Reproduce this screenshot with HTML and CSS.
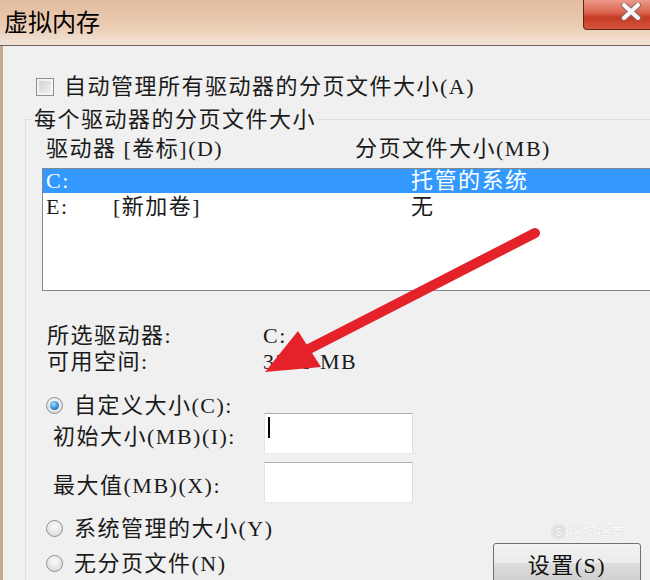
FILE: index.html
```html
<!DOCTYPE html>
<html lang="zh-CN">
<head>
    <meta charset="UTF-8">
    <title>虚拟内存</title>
    <link rel="stylesheet" href="styles.css">
</head>
<body>

    <div class="frame">
        <div class="titlebar">
            <span class="title">虚拟内存</span>
            <div class="close-btn">
                <svg width="20" height="17" viewBox="0 0 20 17">
                    <path d="M3 2 L17 15 M17 2 L3 15" stroke="#8a6a66" stroke-width="6" stroke-linecap="round"/>
                    <path d="M3 2 L17 15 M17 2 L3 15" stroke="#fafafa" stroke-width="4" stroke-linecap="round"/>
                </svg>
            </div>
        </div>

        <div class="window">
            <div class="check-row">
                <span class="checkbox"></span>自动管理所有驱动器的分页文件大小(A)
            </div>

            <div class="group">
                <div class="legend">每个驱动器的分页文件大小</div>

                <div class="list-head">
                    <span class="col-drive">驱动器 [卷标](D)</span>
                    <span>分页文件大小(MB)</span>
                </div>

                <div class="drive-list">
                    <div class="drive-row selected">
                        <span class="col-name">C:</span>
                        <span>托管的系统</span>
                    </div>
                    <div class="drive-row">
                        <span class="col-name"><span class="letter">E:</span>[新加卷]</span>
                        <span>无</span>
                    </div>
                </div>

                <div class="info">
                    <span>所选驱动器:</span><span>C:</span>
                    <span>可用空间:</span><span>3538 MB</span>
                </div>

                <div class="radio-row custom">
                    <span class="radio checked"></span>自定义大小(C):
                </div>
                <div class="field first">
                    <span class="field-label">初始大小(MB)(I):</span>
                    <span class="textbox"><span class="caret"></span></span>
                </div>
                <div class="field second">
                    <span class="field-label">最大值(MB)(X):</span>
                    <span class="textbox"></span>
                </div>
                <div class="radio-row system">
                    <span class="radio"></span>系统管理的大小(Y)
                </div>
                <div class="last-row">
                    <div class="radio-row">
                        <span class="radio"></span>无分页文件(N)
                    </div>
                    <button class="set-btn">设置(S)</button>
                </div>
            </div>
        </div>
    </div>

    <div class="watermark"><span class="wm-logo">S</span>搜狗指南</div>

    <svg class="arrow" width="650" height="580" viewBox="0 0 650 580">
        <line x1="535" y1="233" x2="305" y2="351" stroke="#e5212a" stroke-width="10" stroke-linecap="round"/>
        <polygon points="265,372 298,331 321,367" fill="#e5212a"/>
    </svg>

</body>
</html>
```

FILE: styles.css
```css
* {
    box-sizing: border-box;
}
body {
    margin: 0;
    width: 650px;
    height: 580px;
    overflow: hidden;
    background: #f0f0f0;
    font-family: "Liberation Serif", "Noto Sans CJK SC", serif;
    font-size: 22px;
    letter-spacing: 1.5px;
    color: #1a1a1a;
}
.frame {
    width: 700px;
}
.titlebar {
    height: 46px;
    display: flex;
    align-items: flex-start;
    background: linear-gradient(#e2bc9d, #ebcdb4 60%, #f2e4d8);
    border-bottom: 1px solid #6f6259;
}
.title {
    font-family: "Noto Sans CJK SC", sans-serif;
    font-size: 24px;
    letter-spacing: 0;
    line-height: 42px;
    padding-left: 4px;
    color: #000;
}
.close-btn {
    margin-left: auto;
    margin-right: 21px;
    width: 96px;
    height: 30px;
    display: flex;
    justify-content: center;
    padding-top: 3px;
    border: 1px solid #5b2a1f;
    border-top: none;
    border-radius: 0 0 4px 4px;
    background: linear-gradient(#ec9a88, #d9604a 45%, #c53b26 60%, #d5553b);
}
.window {
    height: 534px;
    padding-top: 27px;
    border-left: 3px solid #c6a98f;
}
.check-row {
    display: flex;
    align-items: center;
    line-height: 27px;
    margin-left: 33px;
}
.checkbox {
    width: 18px;
    height: 18px;
    margin-right: 10px;
    border: 1px solid #8f8f8f;
    background: linear-gradient(135deg, #cdcdcd, #f6f6f6);
    box-shadow: inset 0 0 0 2px #f4f4f4;
}
.group {
    height: 600px;
    margin-top: 19px;
    margin-left: 22px;
    padding-left: 16px;
    border-top: 1px solid #d5dfe5;
    border-left: 1px solid #d5dfe5;
}
.legend {
    width: fit-content;
    margin-top: -14px;
    margin-left: -10px;
    padding: 0 2px;
    line-height: 27px;
    background: #f0f0f0;
}
.list-head {
    display: flex;
    margin-top: 2px;
    padding-left: 4px;
    line-height: 27px;
}
.col-drive {
    width: 309px;
}
.drive-list {
    width: 640px;
    height: 123px;
    margin-top: 6px;
    border: 1px solid #828790;
    background: #fff;
}
.drive-row {
    display: flex;
    height: 24px;
    line-height: 24px;
    margin-bottom: 2px;
    padding-left: 3px;
}
.drive-row.selected {
    background: #3399ff;
    color: #fff;
}
.col-name {
    width: 365px;
}
.letter {
    display: inline-block;
    width: 67px;
}
.info {
    display: grid;
    grid-template-columns: 216px auto;
    margin-top: 32px;
    padding-left: 5px;
    line-height: 26px;
}
.radio-row {
    display: flex;
    align-items: center;
    padding-left: 4px;
    line-height: 27px;
}
.radio-row.custom {
    margin-top: 17px;
}
.radio-row.system {
    margin-top: 12px;
}
.radio {
    position: relative;
    width: 17px;
    height: 17px;
    margin-right: 11px;
    border: 1px solid #8e8f8f;
    border-radius: 50%;
    background: radial-gradient(circle at 50% 35%, #fbfbfb, #d6d6d6);
}
.radio.checked::after {
    content: "";
    position: absolute;
    left: 3px;
    top: 3px;
    width: 9px;
    height: 9px;
    border-radius: 50%;
    background: radial-gradient(circle at 40% 35%, #a6e0ff, #2b86d6 60%, #145fa8);
}
.field {
    display: flex;
    align-items: center;
    padding-left: 11px;
}
.field.first {
    margin-top: -6px;
}
.field.second {
    margin-top: 8px;
}
.field-label {
    width: 211px;
}
.textbox {
    width: 149px;
    height: 41px;
    padding: 3px 0 0 3px;
    background: #fff;
    border: 1px solid;
    border-color: #abadb3 #dbdfe6 #e3e9ef #e2e3ea;
}
.caret {
    display: block;
    width: 2px;
    height: 21px;
    background: #000;
}
.last-row {
    display: flex;
    align-items: center;
    justify-content: space-between;
    width: 599px;
    margin-top: 1px;
}
.set-btn {
    width: 148px;
    height: 40px;
    padding: 0;
    font-family: inherit;
    font-size: 22px;
    letter-spacing: 1.5px;
    color: #111;
    border: 1px solid #707070;
    border-radius: 3px;
    background: linear-gradient(#f3f3f3, #ebebeb 50%, #dddddd 50%, #cfcfcf);
}
.watermark {
    position: absolute;
    left: 551px;
    top: 521px;
    display: flex;
    align-items: center;
    font-family: "Noto Sans CJK SC", sans-serif;
    font-size: 14px;
    letter-spacing: 0;
    color: #fbfbfb;
    text-shadow: 0 0 1px #c4c4c4;
}
.wm-logo {
    width: 15px;
    height: 15px;
    margin-right: 2px;
    border-radius: 50%;
    background: #e2e2e2;
    font-size: 11px;
    line-height: 15px;
    text-align: center;
}
.arrow {
    position: absolute;
    left: 0;
    top: 0;
    pointer-events: none;
}
```
